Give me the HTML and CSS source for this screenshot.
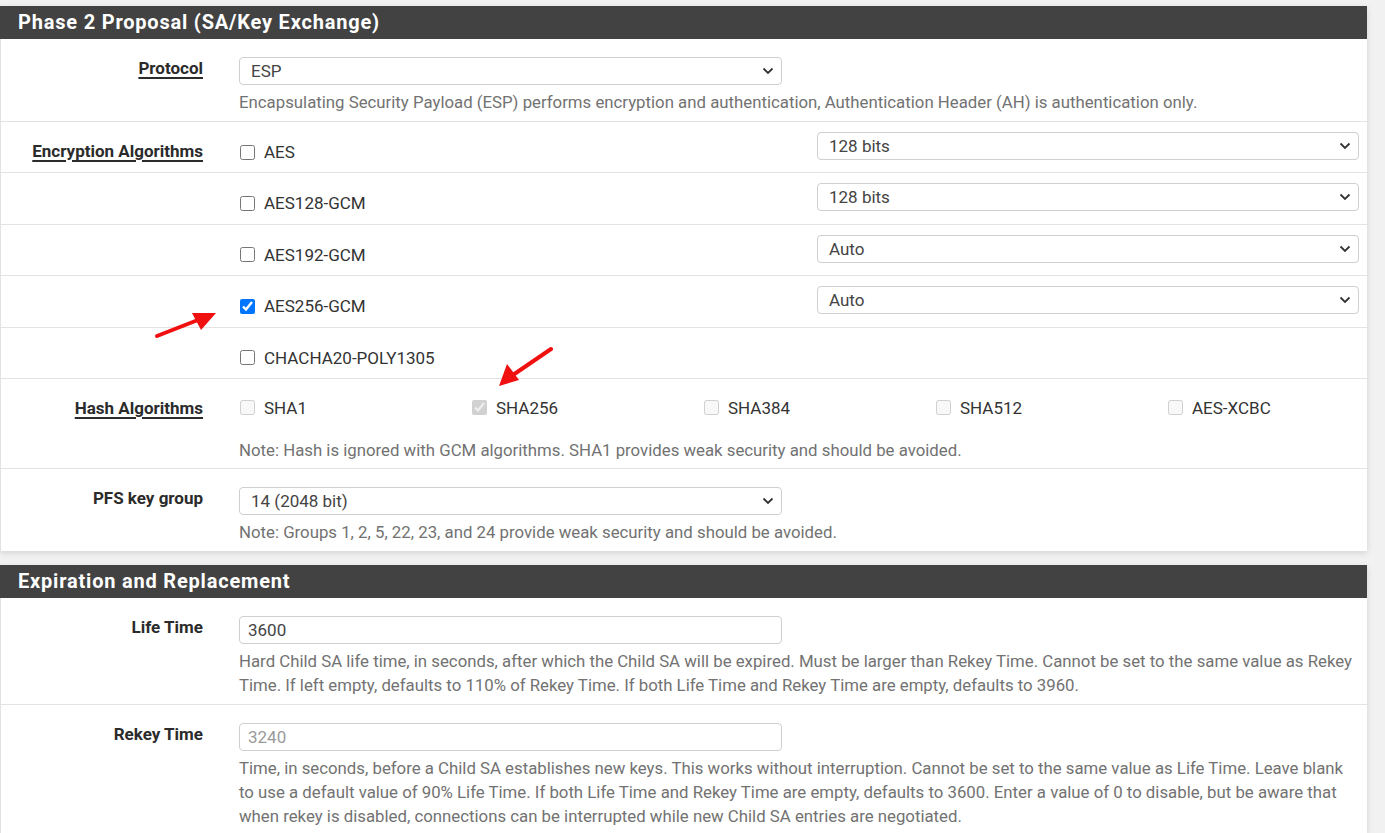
FILE: index.html
```html
<!DOCTYPE html>
<html>
<head>
<meta charset="utf-8">
<link rel="stylesheet" href="styles.css">
</head>
<body>
<div class="page">
  <section class="panel">
    <h2 class="panel-title">Phase 2 Proposal (SA/Key Exchange)</h2>
    <div class="panel-body">
      <div class="row">
        <div class="label"><span class="u">Protocol</span></div>
        <div class="content">
          <select class="sel half"><option>ESP</option></select>
          <div class="help">Encapsulating Security Payload (ESP) performs encryption and authentication, Authentication Header (AH) is authentication only.</div>
        </div>
      </div>
      <div class="row enc">
        <div class="label"><span class="u">Encryption Algorithms</span></div>
        <div class="content split">
          <label class="chk"><input type="checkbox"> AES</label>
          <select class="sel"><option>128 bits</option></select>
        </div>
      </div>
      <div class="row enc">
        <div class="label"></div>
        <div class="content split">
          <label class="chk"><input type="checkbox"> AES128-GCM</label>
          <select class="sel"><option>128 bits</option></select>
        </div>
      </div>
      <div class="row enc">
        <div class="label"></div>
        <div class="content split">
          <label class="chk"><input type="checkbox"> AES192-GCM</label>
          <select class="sel"><option>Auto</option></select>
        </div>
      </div>
      <div class="row enc">
        <div class="label"></div>
        <div class="content split">
          <label class="chk"><input type="checkbox" checked> AES256-GCM</label>
          <select class="sel"><option>Auto</option></select>
        </div>
      </div>
      <div class="row enc">
        <div class="label"></div>
        <div class="content split">
          <label class="chk"><input type="checkbox"> CHACHA20-POLY1305</label>
        </div>
      </div>
      <div class="row hash">
        <div class="label"><span class="u">Hash Algorithms</span></div>
        <div class="content">
          <div class="hash-list">
            <label class="chk"><input type="checkbox" disabled> SHA1</label>
            <label class="chk"><input type="checkbox" disabled checked> SHA256</label>
            <label class="chk"><input type="checkbox" disabled> SHA384</label>
            <label class="chk"><input type="checkbox" disabled> SHA512</label>
            <label class="chk"><input type="checkbox" disabled> AES-XCBC</label>
          </div>
          <div class="help note">Note: Hash is ignored with GCM algorithms. SHA1 provides weak security and should be avoided.</div>
        </div>
      </div>
      <div class="row last">
        <div class="label">PFS key group</div>
        <div class="content">
          <select class="sel half"><option>14 (2048 bit)</option></select>
          <div class="help">Note: Groups 1, 2, 5, 22, 23, and 24 provide weak security and should be avoided.</div>
        </div>
      </div>
    </div>
  </section>

  <section class="panel">
    <h2 class="panel-title">Expiration and Replacement</h2>
    <div class="panel-body">
      <div class="row">
        <div class="label">Life Time</div>
        <div class="content">
          <input class="txt half" type="text" value="3600">
          <div class="help">Hard Child SA life time, in seconds, after which the Child SA will be expired. Must be larger than Rekey Time. Cannot be set to the same value as Rekey Time. If left empty, defaults to 110% of Rekey Time. If both Life Time and Rekey Time are empty, defaults to 3960.</div>
        </div>
      </div>
      <div class="row last">
        <div class="label">Rekey Time</div>
        <div class="content">
          <input class="txt half" type="text" placeholder="3240">
          <div class="help">Time, in seconds, before a Child SA establishes new keys. This works without interruption. Cannot be set to the same value as Life Time. Leave blank to use a default value of 90% Life Time. If both Life Time and Rekey Time are empty, defaults to 3600. Enter a value of 0 to disable, but be aware that when rekey is disabled, connections can be interrupted while new Child SA entries are negotiated.</div>
        </div>
      </div>
    </div>
  </section>

  <svg class="arrows" width="1385" height="833" viewBox="0 0 1385 833">
    <line x1="157" y1="336" x2="203" y2="318" stroke="#f01010" stroke-width="4" stroke-linecap="round"/>
    <polygon points="216,313 192,313 201,330" fill="#f01010"/>
    <line x1="551" y1="349" x2="510" y2="377" stroke="#f01010" stroke-width="4" stroke-linecap="round"/>
    <polygon points="499,386 507,364 519,380" fill="#f01010"/>
  </svg>
</div>
</body>
</html>
```

FILE: styles.css
```css
* { box-sizing: border-box; }
html, body { margin: 0; padding: 0; }
body {
  background: #f1f1f1;
  font-family: Roboto, "Liberation Sans", sans-serif;
  font-size: 17px;
  color: #333;
}
.page {
  position: relative;
  padding-top: 6px;
  width: 1385px;
  height: 833px;
  overflow: hidden;
}
.panel {
  width: 1367px;
  background: #fff;
  margin-bottom: 14px;
  box-shadow: 0 2px 6px rgba(0,0,0,0.12);
}
.panel-title {
  margin: 0;
  height: 33px;
  line-height: 33px;
  padding-left: 18px;
  background: #424242;
  color: #fff;
  font-size: 20px;
  font-weight: 700;
  letter-spacing: 0.8px;
}
.panel-body {
  border-left: 1px solid #e2e2e2;
}
.row {
  display: grid;
  grid-template-columns: 202px 1fr;
  column-gap: 36px;
  padding: 18px 8px 7px 0;
  border-bottom: 1px solid #e3e3e3;
}
.row.last { border-bottom: none; }
.label {
  text-align: right;
  font-weight: 700;
  line-height: 22px;
  color: #2b2b2b;
}
.u {
  text-decoration: underline;
  text-decoration-thickness: 2px;
  text-underline-offset: 3px;
}
.content { min-width: 0; }
.sel, .txt {
  display: block;
  height: 28px;
  border: 1px solid #cfcfcf;
  border-radius: 4px;
  background-color: #fff;
  font-family: Roboto, "Liberation Sans", sans-serif;
  font-size: 17px;
  color: #444;
}
.sel {
  -webkit-appearance: none;
  appearance: none;
  padding: 0 30px 0 11px;
  background-image: url("data:image/svg+xml;utf8,<svg xmlns='http://www.w3.org/2000/svg' width='12' height='8' viewBox='0 0 12 8'><path d='M1.5 1.5 L6 6 L10.5 1.5' fill='none' stroke='%23333' stroke-width='1.8'/></svg>");
  background-repeat: no-repeat;
  background-position: right 7px center;
  background-size: 12px 8px;
}
.txt { padding: 0 8px; }
.txt::placeholder { color: #9a9a9a; }
.half { width: 543px; }
.help {
  margin-top: 5px;
  line-height: 24px;
  font-size: 16.8px;
  color: #727272;
}
.row.enc {
  height: 51.4px;
  padding-top: 0;
  padding-bottom: 0;
}
.row.enc .label { padding-top: 18px; }
.split {
  display: grid;
  grid-template-columns: 1fr 1fr;
  column-gap: 36px;
  align-items: start;
}
.split .sel { width: 100%; margin-top: 10px; }
.chk {
  display: flex;
  align-items: center;
  gap: 9px;
  line-height: 22px;
  color: #333;
}
.split .chk { padding-top: 19px; }
.chk input {
  width: 15px;
  height: 15px;
  margin: 0 0 0 1px;
}
.row.hash { padding-top: 18px; padding-bottom: 6px; }
.hash-list {
  display: grid;
  grid-template-columns: repeat(5, 232px);
}
.note { margin-top: 19px; }
.arrows {
  position: absolute;
  left: 0;
  top: 0;
  pointer-events: none;
}
```
